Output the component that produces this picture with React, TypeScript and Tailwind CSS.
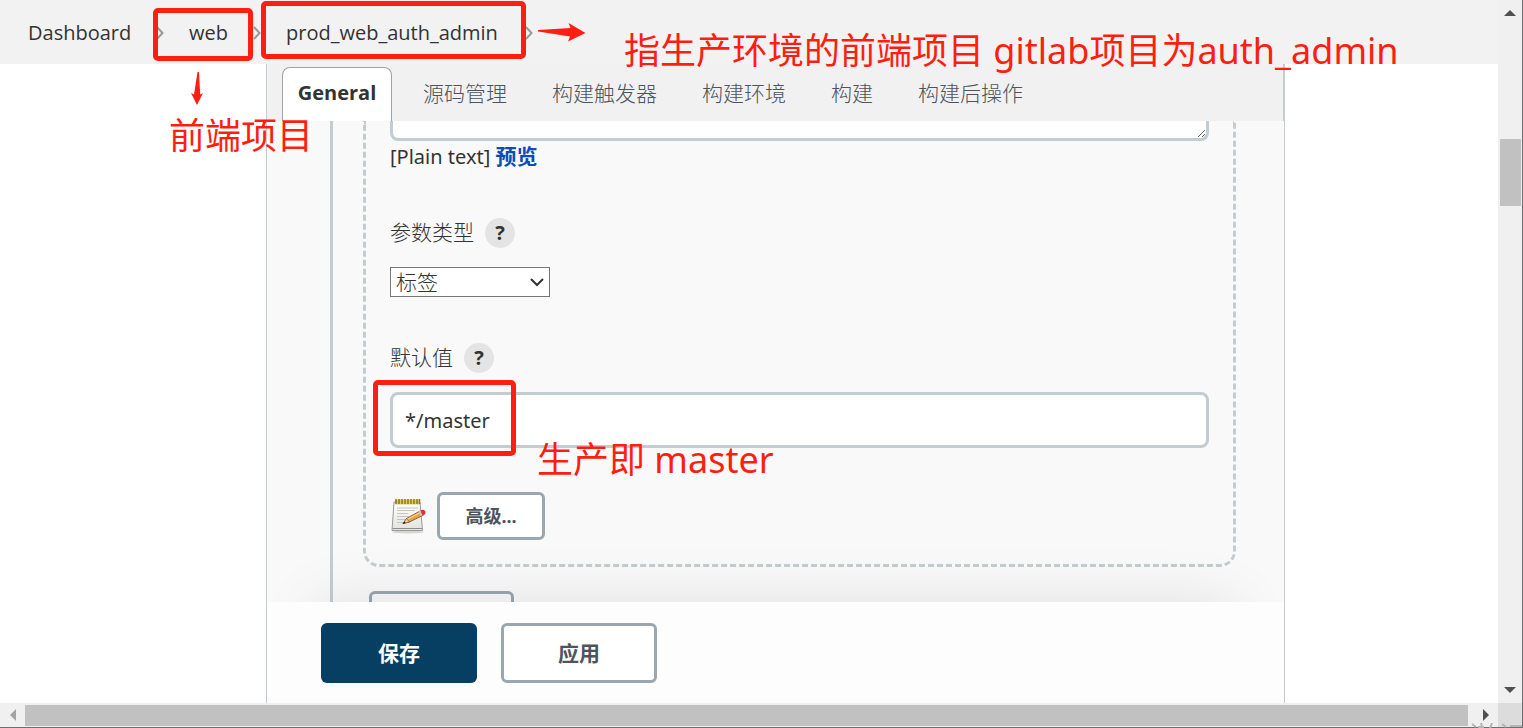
import { ReactNode, useState } from "react";

const crumbs = ["Dashboard", "web", "prod_web_auth_admin"];
const tabs = ["源码管理", "构建触发器", "构建环境", "构建", "构建后操作"];

const Chevron = () => (
  <svg width="8" height="16" viewBox="0 0 8 16" fill="none" stroke="#999" strokeWidth="2">
    <path d="M1 2l5.5 6L1 14" />
  </svg>
);

const Header = () => (
  <header className="h-16 shrink-0 bg-[#f2f2f2] pl-7 pt-px flex items-center">
    <nav className="flex items-center text-[#333] text-xl">
      <a href="#dashboard" className="w-32">
        {crumbs[0]}
      </a>
      <Chevron />
      <a href="#web" className="pl-[25px] w-[89px]">
        {crumbs[1]}
      </a>
      <Chevron />
      <a href="#job" className="pl-[25px] w-[264px]">
        {crumbs[2]}
      </a>
      <Chevron />
    </nav>
  </header>
);

const Tabs = () => (
  <div className="h-[57px] shrink-0 bg-[#f1f1f1] pl-[15px] flex items-end border-r border-[#c3ccd1]">
    <button className="w-[110px] h-[54px] bg-white border border-b-0 border-[#9aa7b0] rounded-t-lg pb-1 text-xl font-bold text-[#333]">
      General
    </button>
    <div className="h-[54px] ml-[31px] flex items-center gap-[45px] text-[#4d545d]">
      {tabs.map((tab) => (
        <button key={tab} className="text-[21px] font-light whitespace-nowrap">
          {tab}
        </button>
      ))}
    </div>
  </div>
);

const FieldLabel = ({ id, gap, children }: { id: string; gap: string; children: ReactNode }) => (
  <div className={`h-8 flex items-center gap-[11px] ${gap}`}>
    <label htmlFor={id} className="text-[21px] font-light">
      {children}
    </label>
    <button className="size-[30px] rounded-full bg-[#e4e4e4] text-xl leading-none font-bold">
      ?
    </button>
  </div>
);

const NotepadIcon = () => (
  <svg width="36" height="36" viewBox="0 0 36 36">
    <defs>
      <linearGradient id="paper" x1="0" y1="0" x2="0" y2="1">
        <stop offset="0" stopColor="#fff" />
        <stop offset="1" stopColor="#e2e2e0" />
      </linearGradient>
    </defs>
    <ellipse cx="18" cy="34" rx="16" ry="1.5" fill="#d5d5d5" />
    <path d="M4 4h26l2.500 28.500H2z" fill="url(#paper)" stroke="#999b98" />
    <path d="M2.500 30.500h29.500" stroke="#8c8e8a" />
    <path d="M7 10h21M7 12.500h18M7 15.500h11M7 18.500h12M7 21.500h9M7 24.500h6" stroke="#c4c5c3" />
    <path d="M5 1.500h25v5H5z" fill="#dccb72" />
    <path
      d="M6 1v5M9 1v5M12 1v5M15 1v5M18 1v5M21 1v5M24 1v5M27 1v5M29.500 1v5"
      stroke="#8f7a14"
      strokeWidth="1.500"
    />
    <path d="M13 25.500l3.500-5L30 13l3.500 4-14 7z" fill="#e2a448" stroke="#7a4f16" strokeWidth="0.800" />
    <path d="M17 21.500L31 14" stroke="#f8d694" strokeWidth="1.200" />
    <path d="M13 25.500l3.500-5 3 3.500z" fill="#e8cfa0" stroke="#7a4f16" strokeWidth="0.600" />
    <path d="M12.500 26l2-2.500 1.200 1.500z" fill="#222" />
    <path d="M28.500 13.500l2 4.500 2-1-2-4.500z" fill="#c9cbc9" />
    <path d="M30.500 12.500q3-1.500 4.500.5t-1 4l-1.500.5z" fill="#e03236" />
  </svg>
);

const Form = () => {
  const [branch, setBranch] = useState("*/master");

  return (
    <section className="relative flex-1 min-h-0 overflow-hidden bg-[#f9f9f9] pl-[63px] pr-12 text-[#333] font-['Noto_Sans','Noto_Sans_CJK_SC',sans-serif]">
      <div className="h-[600px] border-l-3 border-[#c3ccd1] pl-[30px]">
        <div className="border-3 border-t-0 border-dashed border-[#c3ccd1] rounded-b-2xl pl-6 pr-6 pb-6">
          <textarea
            aria-label="描述"
            className="block w-full h-5 bg-white border-3 border-t-0 border-[#c3ccd1] rounded-b-lg resize-y overflow-hidden"
          />
          <p className="mt-[3px] h-6 leading-6 text-xl">
            [Plain text]{" "}
            <a href="#preview" className="text-[#0b4db5] text-[21px] font-bold">
              预览
            </a>
          </p>

          <FieldLabel id="type" gap="mt-[49px]">
            参数类型
          </FieldLabel>
          <div className="relative mt-[18px] w-40">
            <select
              id="type"
              className="block appearance-none w-full h-[30px] bg-white border border-[#767676] pl-[5px] text-[21px] font-light leading-7"
            >
              <option>标签</option>
            </select>
            <svg
              className="absolute right-[6px] top-[10px] pointer-events-none"
              width="14"
              height="10"
              viewBox="0 0 14 10"
              fill="none"
              stroke="#333"
              strokeWidth="2"
            >
              <path d="M1 2l6 6 6-6" />
            </svg>
          </div>

          <FieldLabel id="default" gap="mt-[45px]">
            默认值
          </FieldLabel>
          <input
            id="default"
            value={branch}
            onChange={(e) => setBranch(e.target.value)}
            className="block mt-[18px] w-full h-14 bg-white border-3 border-[#c3ccd1] rounded-lg px-3 text-xl"
          />

          <div className="mt-11 flex items-center gap-[11px]">
            <NotepadIcon />
            <button className="w-[108px] h-12 bg-white border-3 border-[#9aa7b0] rounded-md text-lg font-bold text-[#4d545d]">
              高级...
            </button>
          </div>
        </div>
        <button
          aria-label="添加参数"
          className="block mt-6 ml-[6px] w-[145px] h-12 bg-[#f9f9f9] border-3 border-[#9aa7b0] rounded-md"
        />
      </div>
      <div className="absolute inset-x-12 top-full h-24 shadow-[0_0_60px_rgba(0,0,0,0.1)]" />
    </section>
  );
};

const Footer = () => (
  <footer className="h-[101px] shrink-0 bg-[#fdfdfd] pl-[54px] pt-[21px] flex gap-6 text-[21px] font-bold">
    <button className="w-39 h-[60px] rounded-md bg-[#073f62] pt-px text-white">保存</button>
    <button className="w-39 h-[60px] rounded-md bg-white border-3 border-[#9aa7b0] pt-px text-[#4d545d]">
      应用
    </button>
  </footer>
);

const VerticalBar = () => (
  <div className="w-[25px] shrink-0 bg-[#f0f0f0] border-r border-[#6e6e70] flex flex-col items-center justify-between py-[9px]">
    <svg width="12" height="7" viewBox="0 0 12 7" fill="#505050">
      <path d="M6 1l6 6H0z" />
    </svg>
    <div className="flex-1 pt-[123px]">
      <div className="w-[21px] h-[67px] bg-[#c1c1c1]" />
    </div>
    <svg width="12" height="7" viewBox="0 0 12 7" fill="#505050">
      <path d="M0 0h12L6 6z" />
    </svg>
  </div>
);

const HorizontalBar = () => (
  <div className="relative h-[25px] shrink-0 bg-[#f0f0f0] border-b border-[#6e6e70] flex items-center">
    <div className="w-[25px] flex justify-center">
      <svg width="6" height="12" viewBox="0 0 6 12" fill="#a3a3a3">
        <path d="M6 0v12L0 6z" />
      </svg>
    </div>
    <div className="flex-1 h-[21px] bg-[#c1c1c1]" />
    <div className="w-[30px] pl-[15px]">
      <svg width="6" height="12" viewBox="0 0 6 12" fill="#505050">
        <path d="M0 0v12l6-6z" />
      </svg>
    </div>
    <div className="w-[25px] h-full bg-[#dcdcdc] border-r border-[#6e6e70]" />
    <svg
      className="absolute right-0 -bottom-px"
      width="52"
      height="5"
      viewBox="0 0 52 5"
      fill="none"
      stroke="#b5b5b5"
      strokeWidth="2"
    >
      <path d="M1 1l4 3M10 0l1 4M21 0l-2 5M7 4h6M31 1l4 3M39 3h12" />
    </svg>
  </div>
);

// red marks drawn over the page
const Annotations = () => (
  <div className="absolute inset-0 pointer-events-none text-[#ff1e10] text-4xl leading-10 whitespace-nowrap font-['Noto_Sans','Noto_Sans_CJK_SC',sans-serif]">
    <div className="absolute left-[153px] top-2 w-[100px] h-[53px] border-5 border-[#ff1e10] rounded-[5px]" />
    <div className="absolute left-[261px] top-px w-[265px] h-[58px] border-5 border-[#ff1e10] rounded-[5px]" />
    <div className="absolute left-[373px] top-[380px] w-[143px] h-[76px] border-5 border-[#ff1e10] rounded-[5px]" />
    <svg className="absolute left-[190px] top-[72px]" width="14" height="33" viewBox="0 0 14 33" fill="#ff1e10">
      <path d="M7.500 0h1.500l1.200 22.500 2.800-1.500L7 33 1 21l3 1.500z" />
    </svg>
    <svg className="absolute left-[538px] top-[23px]" width="48" height="19" viewBox="0 0 48 19" fill="#ff1e10">
      <path d="M0 7l32.500-2-2-5L47.500 10 30 18.500l2-5L0 8.500z" />
    </svg>
    <p className="absolute left-[169px] top-[116px]">前端项目</p>
    <p className="absolute left-[624px] top-[31px]">指生产环境的前端项目 gitlab项目为auth_admin</p>
    <p className="absolute left-[537px] top-[440px]">生产即 master</p>
  </div>
);

const App = () => (
  <div className="relative h-screen flex flex-col overflow-hidden bg-white font-['Open_Sans','Noto_Sans_CJK_SC',sans-serif]">
    <div className="flex-1 min-h-0 flex">
      <div className="flex-1 min-w-0 flex flex-col">
        <Header />
        <main className="flex-1 min-h-0 ml-[266px] mr-[213px] border-x border-[#c3ccd1] flex flex-col">
          <Tabs />
          <Form />
          <Footer />
        </main>
      </div>
      <VerticalBar />
    </div>
    <HorizontalBar />
    <Annotations />
  </div>
);

export default App;
